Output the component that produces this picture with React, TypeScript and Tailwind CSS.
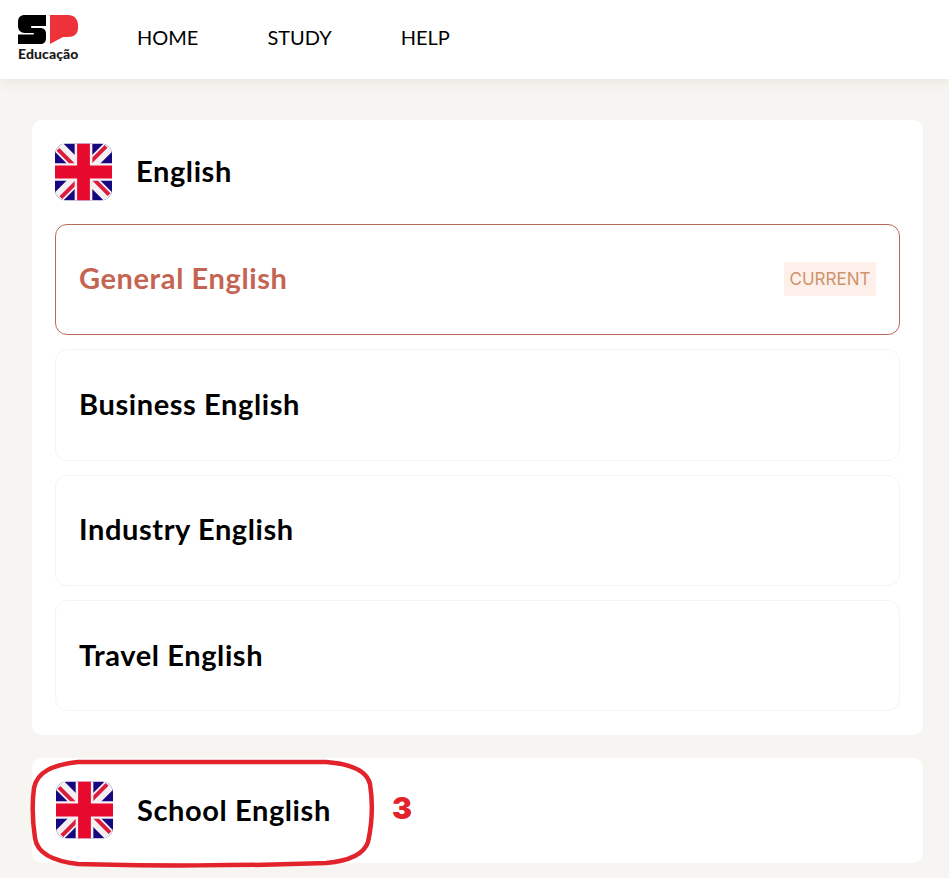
const courses = ['Business English', 'Industry English', 'Travel English'];

function Flag({ id }: { id: string }) {
  return (
    <svg viewBox="0 0 58 58" className="block w-[57px] h-[58px] shrink-0">
      <defs>
        <clipPath id={id}>
          <rect width="58" height="58" rx="11" />
        </clipPath>
      </defs>
      <g clipPath={`url(#${id})`}>
        <rect width="58" height="58" fill="#16067f" />
        <path d="M0 0L58 58M58 0L0 58" stroke="#f3eff2" strokeWidth="12" />
        <path d="M3 6L20 23M52 3L35 20M6 55L23 38M55 52L38 35" stroke="#dd1c3c" strokeWidth="4" />
        <path d="M29 0V58M0 29H58" stroke="#f6f2f4" strokeWidth="18" />
        <path d="M29 0V58M0 29H58" stroke="#e8092e" strokeWidth="13" />
      </g>
    </svg>
  );
}

function Logo() {
  return (
    <div className="w-[62px] flex flex-col items-start">
      <svg viewBox="0 0 62 30" className="block w-[62px] h-[30px]">
        <path
          d="M7 0H28V11H14C12.5 11 12.5 13 14 13H22C26 13 28 15 28 19V23C28 27 26 29 22 29H0V19.5H15C16.5 19.5 16.5 18 15 18H7C2.5 18 0 15 0 11V7C0 2.5 2.5 0 7 0Z"
          fill="#000"
        />
        <path
          d="M32 0H50C56 0 60 4 60 10V13C60 19 56 22 50 22H45L32 29Z"
          fill="#ee3239"
        />
      </svg>
      <span className="mt-[1px] text-[14px] leading-[16px] tracking-[0.1px] font-black text-[#1a1a1a] font-['Lato',sans-serif]">
        Educação
      </span>
    </div>
  );
}

export default function App() {
  return (
    <div className="relative h-[878px] overflow-hidden bg-[#f7f5f1] font-['Lato',sans-serif]">
      <header className="h-[79px] bg-white shadow-[0_2px_12px_rgba(90,70,60,0.1)] flex items-center pl-[18px]">
        <div className="mt-[-2px]">
          <Logo />
        </div>
        <nav className="flex ml-[57px] gap-[69px] text-[20px] text-black mt-[-6px]">
          <a>HOME</a>
          <a>STUDY</a>
          <a>HELP</a>
        </nav>
      </header>

      <main className="px-[32px] w-[923px] box-content pt-[41px]">
        <section className="bg-white rounded-[10px] w-[891px] px-[23px] pt-[23px] pb-[23.8px]">
          <div className="flex items-center gap-[24px] h-[58px]">
            <Flag id="flag-english" />
            <h2 className="text-[29px] tracking-[0.6px] font-bold text-black pb-[2px]">English</h2>
          </div>
          <div className="mt-[23px] flex flex-col gap-[14px]">
            <div className="h-[111.3px] rounded-[12px] border border-[#b9685a] flex items-center justify-between pl-[23px] pr-[23px]">
              <span className="text-[29px] tracking-[0.6px] font-bold text-[#c46452] pb-[3px]">General English</span>
              <span className="bg-[#fdf0ea] w-[92px] h-[34px] mb-[1px] pt-[2px] flex items-center justify-center text-[17px] text-[#d0936c] font-['Inter',sans-serif]">
                CURRENT
              </span>
            </div>
            {courses.map((course) => (
              <div
                key={course}
                className="h-[111.3px] rounded-[12px] border border-[#f6f4f1] flex items-center pl-[23px]"
              >
                <span className="text-[29px] tracking-[0.6px] font-bold text-black pb-[2px]">{course}</span>
              </div>
            ))}
          </div>
        </section>

        <section className="mt-[23px] bg-white rounded-[10px] w-[891px] h-[105px] pl-[24px] flex items-center gap-[24px]">
          <Flag id="flag-school" />
          <h2 className="text-[29px] tracking-[0.6px] font-bold text-black pb-[2px]">School English</h2>
        </section>
      </main>

      {/* annotation drawn over the page */}
      <svg className="absolute left-[30px] top-[758px] w-[346px] h-[110px]" viewBox="0 0 346 110" fill="none">
        <path
          d="M48 4H296C322 6 337 13 340 26C343 45 342 66 338 84C334 96 318 103 296 105C220 108 110 108 48 106C22 103 7 95 5 80C2 60 2 45 4 30C7 14 22 7 48 4Z"
          stroke="#e2232c"
          strokeWidth="4.5"
        />
      </svg>
      <span className="absolute left-[392px] top-[790px] text-[30px] leading-[36px] font-black text-[#e2232c] font-['Inter',sans-serif]">3</span>
    </div>
  );
}
